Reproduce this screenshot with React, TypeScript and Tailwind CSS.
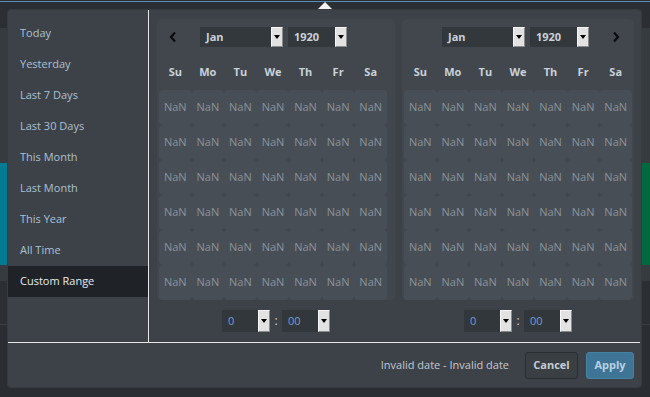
const ranges = [
  "Today",
  "Yesterday",
  "Last 7 Days",
  "Last 30 Days",
  "This Month",
  "Last Month",
  "This Year",
  "All Time",
  "Custom Range",
];
const days = ["Su", "Mo", "Tu", "We", "Th", "Fr", "Sa"];

function DropButton() {
  return (
    <div className="w-[12px] h-full flex items-center justify-center bg-[#e2e2e2] border-t border-l border-t-[#f6f6f6] border-l-[#f6f6f6] border-b border-r border-b-[#8a8a8a] border-r-[#8a8a8a]">
      <div className="w-0 h-0 border-x-[3px] border-x-transparent border-t-[4px] border-t-black" />
    </div>
  );
}

function Select({ value, width, time }: { value: string; width: string; time?: boolean }) {
  return (
    <div className={`flex ${width} ${time ? "h-[22px] bg-[#32373c]" : "h-[20px] bg-[#33383d]"}`}>
      <span
        className={`flex-1 flex items-center pl-[6px] text-[11px] ${
          time ? "text-[#6f9fd2]" : "font-bold text-[#c9d1d9]"
        }`}
      >
        {value}
      </span>
      <DropButton />
    </div>
  );
}

function Chevron({ dir }: { dir: "left" | "right" }) {
  return (
    <svg width="8" height="12" viewBox="0 0 8 12">
      <path
        d={dir === "left" ? "M6 1.5 L2 6 L6 10.5" : "M2 1.5 L6 6 L2 10.5"}
        fill="none"
        stroke="#0b0c0d"
        strokeWidth="2.2"
      />
    </svg>
  );
}

function Calendar({ side }: { side: "left" | "right" }) {
  const selects = (
    <div className="flex gap-[5px]">
      <Select value="Jan" width="w-[83px]" />
      <Select value="1920" width="w-[59px]" />
    </div>
  );
  return (
    <div className={side === "left" ? "w-[238px]" : "w-[232px]"}>
      <div
        className={`h-[281px] rounded-t-[5px] rounded-b-[4px] bg-[#41474d] px-[2px] ${
          side === "left" ? "pr-[8px]" : ""
        }`}
      >
        {side === "left" ? (
          <div className="h-[36px] flex items-center pl-[10px]">
            <Chevron dir="left" />
            <div className="ml-[23px]">{selects}</div>
          </div>
        ) : (
          <div className="h-[36px] flex items-center justify-end pr-[12px]">
            {selects}
            <div className="ml-[23px]">
              <Chevron dir="right" />
            </div>
          </div>
        )}
        <div className="grid grid-cols-7 w-[228px] h-[35px] items-center">
          {days.map((d) => (
            <div key={d} className="text-center text-[11px] font-bold text-[#c9d1d9]">
              {d}
            </div>
          ))}
        </div>
        <div className="grid grid-cols-7 w-[228px]">
          {Array.from({ length: 42 }).map((_, i) => (
            <div
              key={i}
              className="h-[35px] rounded-[4px] bg-[#484e55] flex items-center justify-center text-[11px] text-[#8a939b]"
            >
              NaN
            </div>
          ))}
        </div>
      </div>
      <div className={`flex items-center justify-center pt-[10px] ${side === "left" ? "pr-[0px]" : ""}`}>
        <Select value="0" width="w-[48px]" time />
        <span className="w-[12px] text-center text-[12px] text-[#c9d1d9]">:</span>
        <Select value="00" width="w-[48px]" time />
      </div>
    </div>
  );
}

export default function App() {
  return (
    <div
      className="relative w-[650px] h-[397px] overflow-hidden bg-[#2a2e32]"
      style={{ fontFamily: '"Open Sans", "Noto Sans", sans-serif' }}
    >
      {/* page behind the picker */}
      <div className="flex flex-col">
        <div className="h-[1px] bg-[#2a2e32]" />
        <div className="h-[1px] bg-[#5b8fb8]" />
        <div className="h-[26px] bg-[#2b2f33]" />
        <div className="h-[135px] bg-[#363b40]" />
        <div className="h-[102px] flex">
          <div className="flex-1 bg-[#007b93]" />
          <div className="flex-1 bg-[#00693d]" />
        </div>
        <div className="h-[16px] bg-[#363b40]" />
        <div className="h-[44px] bg-[#2b2f33] border-b border-[#3a3f44]" />
      </div>

      {/* arrow */}
      <div className="absolute left-[318px] top-[2px] w-0 h-0 border-x-[7px] border-x-transparent border-b-[7px] border-b-[#f2f2f2]" />

      {/* picker */}
      <div className="absolute left-[7px] top-[9px] w-[635px] h-[379px] rounded-[4px] border border-[#363b40] bg-[#3d4248] flex flex-col">
        <div className="flex h-[332px]">
          <div className="w-[141px] border-r border-[#e6e6e6] pt-[8px]">
            {ranges.map((r) => (
              <div
                key={r}
                className={`h-[31px] flex items-center pl-[12px] text-[11px] ${
                  r === "Custom Range" ? "bg-[#1f2226] text-[#e4ecf4]" : "text-[#abc0d4]"
                }`}
              >
                {r}
              </div>
            ))}
          </div>
          <div className="flex pl-[8px] pt-[9px] gap-[7px]">
            <Calendar side="left" />
            <Calendar side="right" />
          </div>
        </div>
        <div className="h-[1px] bg-[#e6e6e6] mr-[1px]" />
        <div className="flex-1 flex items-center justify-end pr-[7px]">
          <span className="text-[11px] text-[#c3c9cf] mr-[16px]">Invalid date - Invalid date</span>
          <button className="h-[27px] w-[53px] rounded-[3px] border border-[#2a2e32] bg-[#3a3f44] text-[11px] font-bold text-[#c5ccd3] mr-[8px]">
            Cancel
          </button>
          <button className="h-[27px] w-[48px] rounded-[3px] border border-[#4682a4] bg-[#3e7597] text-[11px] font-bold text-[#b9d0e2]">
            Apply
          </button>
        </div>
      </div>
    </div>
  );
}
